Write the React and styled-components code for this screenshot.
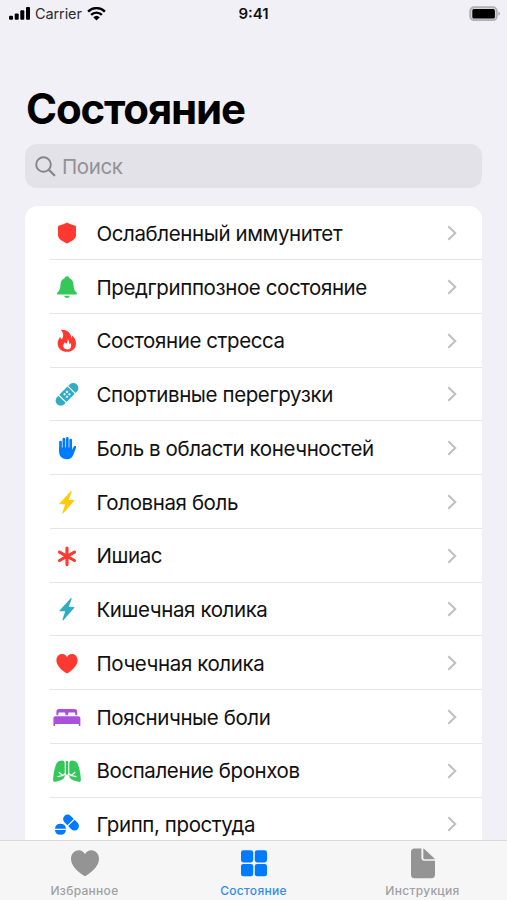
import React from "react";
import styled, { createGlobalStyle, css } from "styled-components";

const colors = {
  page: "#f1f0f6",
  field: "#e3e2e8",
  red: "#ff3830",
  green: "#34c759",
  teal: "#30acc4",
  blue: "#007aff",
  yellow: "#fecb0a",
  purple: "#ab50dc",
  gray: "#949494",
};

const GlobalStyle = createGlobalStyle`
  body {
    margin: 0;
    background: ${colors.page};
    font-family: Inter, "Liberation Sans", sans-serif;
    color: #111;
  }
`;

const ShieldIcon = () => (
  <path d="M14 3.600c2.500 1.500 5.300 2.500 7.800 2.900.8.150 1.200.6 1.200 1.400v8.300c0 3.600-4.700 6.200-9 8.200-4.300-2-9-4.600-9-8.200V7.900c0-.8.4-1.250 1.200-1.400 2.500-.4 5.300-1.400 7.800-2.900z" />
);

const BellIcon = () => (
  <>
    <path d="M14 3.300c1.300 0 2.200.8 2.500 1.900 2.500 1.100 3.800 3.100 4 6.200.2 4 .8 6 2.800 7.900.9.900 1 2.100-.3 2.100H5c-1.300 0-1.200-1.200-.3-2.100 2-1.900 2.600-3.900 2.800-7.900.2-3.100 1.500-5.100 4-6.200.3-1.100 1.200-1.900 2.500-1.900z" />
    <path d="M11.300 22.700h5.400c-.3 1.400-1.300 2.200-2.700 2.200s-2.400-.8-2.700-2.200z" />
  </>
);

const FlameIcon = () => (
  <path
    fillRule="evenodd"
    d="M7.600 2.700c6-.5 9.800 2.300 11 8.300.5-.7.700-1.500.6-2.400 2.600 2.300 3.800 4.900 3.800 7.900 0 5-3.700 8.300-9 8.300-5.500 0-9.300-3.400-9.300-8.400 0-2.500.9-4.500 2.600-6.400.2 1.200.7 2 1.500 2.600C11 9 10.600 5.600 7.600 2.700zM14.700 12.200c.2 2.200-.5 3.500-1.500 4.500-.6-.3-1-.8-1.200-1.500-1.100 1.100-1.700 2.300-1.700 3.600 0 2.200 1.600 3.600 3.900 3.600s4-1.500 4-3.700c0-1.100-.3-2-.9-2.800-.2.600-.5 1-1 1.300.1-2.100-.4-3.700-1.600-5z"
  />
);

const BandageIcon = () => (
  <g transform="rotate(-45 14 14.300)">
    <path d="M7 9.200H5.100a5.100 5.100 0 0 0 0 10.200H7z" />
    <path d="M21 9.200h1.900a5.100 5.100 0 0 1 0 10.200H21z" />
    <rect x="8.200" y="9.200" width="11.600" height="10.200" />
    <g fill="#fff" opacity="0.850">
      <rect x="11.200" y="11.500" width="2.200" height="2.200" rx="0.700" />
      <rect x="14.600" y="11.500" width="2.200" height="2.200" rx="0.700" />
      <rect x="11.200" y="14.900" width="2.200" height="2.200" rx="0.700" />
      <rect x="14.600" y="14.900" width="2.200" height="2.200" rx="0.700" />
    </g>
  </g>
);

const HandIcon = () => (
  <>
    <path
      d="M7.500 8v9M10.900 5v10M14.300 4.400v11M17.700 6v11"
      fill="none"
      stroke="currentColor"
      strokeWidth="2.700"
      strokeLinecap="round"
    />
    <path d="M6.150 13.500h12.900v2.200l1.500-2.800c.5-.9 1.400-1.100 2-.8.7.4.7 1.200.4 2l-2.500 6.400c-1.100 3-3.100 4.700-6.400 4.700-4.600 0-7.900-2.800-7.900-7.500z" />
  </>
);

const BoltIcon = () => (
  <path d="M17.700 3.200 6.500 15.400c-.4.500-.2.900.4.900h5.300L9.500 24.600c-.3.900.5 1.200 1.100.5l10.500-12c.5-.5.200-1-.4-1h-5l2.900-8.200c.3-.8-.4-1.200-.9-.7z" />
);

const AsteriskIcon = () => (
  <path
    d="M14 6v16.600M6.500 10.100l15 8.400M21.500 10.100 6.500 18.500"
    fill="none"
    stroke="currentColor"
    strokeWidth="3.100"
    strokeLinecap="round"
  />
);

const HeartIcon = () => (
  <path d="M14 24.300c-.3 0-.7-.2-1-.4C7.200 20.200 3.400 15.800 3.400 11.300c0-3.700 2.500-6.300 5.700-6.300 2.200 0 3.900 1.100 4.900 3 1-1.900 2.700-3 4.900-3 3.200 0 5.700 2.600 5.700 6.300 0 4.500-3.800 8.900-9.600 12.600-.3.200-.7.400-1 .4z" />
);

const BedIcon = () => (
  <>
    <path d="M3.400 12.200V8.700c0-1.800 1-2.700 2.800-2.700h15.200c1.800 0 2.800.9 2.800 2.700v3.500h-1.900v-1.300c0-.9-.5-1.400-1.400-1.400h-4.300c-.9 0-1.400.5-1.400 1.400v1.300h-2.800v-1.300c0-.9-.5-1.400-1.400-1.400H6.700c-.9 0-1.400.5-1.400 1.400v1.300z" />
    <path d="M2.600 13.200h22.600c1.400 0 2.200.8 2.200 2.200v7.100c0 .8-1.600.8-1.600 0v-1.600H2v1.600c0 .8-1.600.8-1.600 0v-7.100c0-1.400.8-2.200 2.200-2.200z" />
  </>
);

const LungsIcon = () => (
  <>
    <path d="M8 3.700c2.300-.4 3.700.6 3.700 2.600v12.500c0 2-1.100 3-3 3.900-2.300 1.200-4.600 1.800-6.700 2-1.300.1-2-.7-1.900-2C.4 16.500 1.500 11 3.500 6.500c.9-1.700 2.300-2.500 4.500-2.800z" />
    <path d="M20 3.700c-2.300-.4-3.700.6-3.700 2.600v12.500c0 2 1.100 3 3 3.900 2.300 1.200 4.600 1.800 6.700 2 1.300.1 2-.7 1.900-2-.3-6.200-1.400-11.700-3.400-16.200-.9-1.700-2.300-2.500-4.500-2.800z" />
    <rect x="12.800" y="4" width="2.400" height="13.500" />
    <path
      d="M12.400 16.600 9.800 18.500l-4.800 1.200M9.800 18.500l-3.600-3M15.600 16.600l2.600 1.900 4.800 1.200M18.200 18.500l3.600-3"
      fill="none"
      stroke="#fff"
      strokeWidth="1.200"
      strokeLinecap="round"
    />
  </>
);

const PillsIcon = () => (
  <>
    <path d="M1.900 18.700a5.600 5.600 0 0 1 11.100 0z" />
    <path d="M1.900 20a5.600 5.600 0 0 0 11.100 0z" />
    <g transform="rotate(45 18 12.500)">
      <path d="M17.400 8h-4.200a4.500 4.500 0 0 0 0 9h4.200z" />
      <path d="M18.600 8h4.300a4.500 4.500 0 0 1 0 9h-4.300z" />
    </g>
  </>
);

const conditions = [
  { title: "Ослабленный иммунитет", icon: ShieldIcon, color: "red" },
  { title: "Предгриппозное состояние", icon: BellIcon, color: "green" },
  { title: "Состояние стресса", icon: FlameIcon, color: "red" },
  { title: "Спортивные перегрузки", icon: BandageIcon, color: "teal" },
  { title: "Боль в области конечностей", icon: HandIcon, color: "blue" },
  { title: "Головная боль", icon: BoltIcon, color: "yellow" },
  { title: "Ишиас", icon: AsteriskIcon, color: "red" },
  { title: "Кишечная колика", icon: BoltIcon, color: "teal" },
  { title: "Почечная колика", icon: HeartIcon, color: "red" },
  { title: "Поясничные боли", icon: BedIcon, color: "purple" },
  { title: "Воспаление бронхов", icon: LungsIcon, color: "green" },
  { title: "Грипп, простуда", icon: PillsIcon, color: "blue" },
];

const StatusBar = () => (
  <StatusBarStyled>
    <StatusLeft>
      <svg width="21" height="14" viewBox="0 0 21 14">
        <rect x="0" y="8.700" width="4" height="4" rx="1" />
        <rect x="5.700" y="6.400" width="4" height="6.300" rx="1" />
        <rect x="11.300" y="3.300" width="4" height="9.400" rx="1" />
        <rect x="17" y="0" width="4" height="12.700" rx="1" />
      </svg>
      <Carrier>Carrier</Carrier>
      <svg width="19" height="14" viewBox="0 0 19 14">
        <path
          d="M1.100 4.600a12 12 0 0 1 16.800 0M4.100 7.800a7.700 7.700 0 0 1 10.800 0"
          fill="none"
          stroke="#000"
          strokeWidth="2.400"
        />
        <path d="M9.500 13.500 6.200 10.200a4.800 4.800 0 0 1 6.600 0z" />
      </svg>
    </StatusLeft>
    <Time>9:41</Time>
    <StatusRight>
      <svg width="32" height="16" viewBox="0 0 32 16">
        <rect x="1.200" y="1.200" width="26.600" height="13" rx="3.800" fill="#d5d5d7" stroke="#b0b0b2" strokeWidth="1.800" />
        <rect x="3.300" y="3.100" width="22.600" height="9.400" rx="1.600" />
        <path d="M29.300 5.500c2.300.8 2.300 3.400 0 4.200z" fill="#b0b0b2" />
      </svg>
    </StatusRight>
  </StatusBarStyled>
);

const SearchField = () => (
  <SearchStyled>
    <svg width="21" height="21" viewBox="0 0 21 21" fill="none" stroke="#858489" strokeLinecap="round">
      <circle cx="8.500" cy="8.500" r="7.300" strokeWidth="1.900" />
      <path d="m14 14 5.300 5.300" strokeWidth="2.300" />
    </svg>
    <Placeholder>Поиск</Placeholder>
  </SearchStyled>
);

const Condition = ({ title, icon: Icon, color }) => (
  <ConditionRow>
    <ConditionIcon viewBox="0 0 28 28" tint={color}>
      <Icon />
    </ConditionIcon>
    <ConditionTitle>{title}</ConditionTitle>
    <Chevron viewBox="0 0 10 16">
      <path d="m1.300 1.200 7 6.800-7 6.800" />
    </Chevron>
  </ConditionRow>
);

const TabBar = () => (
  <TabBarStyled>
    <Tab>
      <svg width="30" height="32" viewBox="0 0 30 32">
        <path d="M15 28.200c-.4 0-.9-.3-1.300-.6C6.200 22.600 1 17.100 1 10.700 1 5.800 4.300 2.200 8.600 2.200c2.800 0 5.100 1.500 6.400 3.800 1.300-2.300 3.600-3.800 6.400-3.800 4.300 0 7.600 3.600 7.600 8.500 0 6.400-5.200 11.900-12.700 16.900-.4.300-.9.600-1.300.6z" />
      </svg>
      <TabLabel>Избранное</TabLabel>
    </Tab>
    <Tab active>
      <svg width="28" height="32" viewBox="0 0 28 32">
        <rect x="1" y="2.200" width="12.200" height="12.200" rx="2.300" />
        <rect x="14.800" y="2.200" width="12.200" height="12.200" rx="2.300" />
        <rect x="1" y="16" width="12.200" height="12.200" rx="2.300" />
        <rect x="14.800" y="16" width="12.200" height="12.200" rx="2.300" />
      </svg>
      <TabLabel active>Состояние</TabLabel>
    </Tab>
    <Tab>
      <svg width="26" height="32" viewBox="0 0 26 32">
        <path d="M4.500.4h6.900v9.400c0 2 1 3 3 3H25v14c0 2.300-1.200 3.500-3.500 3.500h-17C2.200 30.300 1 29.100 1 26.800V3.900C1 1.600 2.200.4 4.500.4z" />
        <path d="M13.300.6c.7.200 1.200.5 1.800 1.100l8.600 8.100c.6.500.9.900 1.100 1.400h-10.400c-.8 0-1.100-.3-1.100-1.100z" />
      </svg>
      <TabLabel>Инструкция</TabLabel>
    </Tab>
  </TabBarStyled>
);

const App = () => (
  <>
    <GlobalStyle />
    <Screen>
      <StatusBar />
      <Content>
        <Title>Состояние</Title>
        <SearchField />
        <ConditionList>
          {conditions.map((item) => (
            <Condition key={item.title} {...item} />
          ))}
        </ConditionList>
      </Content>
      <TabBar />
    </Screen>
  </>
);

export default App;

const Screen = styled.div`
  width: 507px;
  height: 900px;
  display: flex;
  flex-direction: column;
  overflow: hidden;
  background: ${colors.page};
`;

const StatusBarStyled = styled.header`
  flex: none;
  height: 27px;
  padding: 0 6px 0 9px;
  display: grid;
  grid-template-columns: 1fr auto 1fr;
  align-items: center;
  box-sizing: border-box;
  svg {
    display: block;
  }
`;

const StatusLeft = styled.div`
  display: flex;
  align-items: center;
  gap: 5px;
`;

const StatusRight = styled.div`
  display: flex;
  justify-content: flex-end;
`;

const Carrier = styled.span`
  font-size: 14.500px;
  letter-spacing: -0.1px;
  line-height: 18px;
  color: #2b2b2d;
`;

const Time = styled.span`
  margin-right: 3px;
  font-size: 15px;
  font-weight: 600;
  line-height: 18px;
`;

const Content = styled.main`
  flex: 1;
  min-height: 0;
  overflow: hidden;
  padding: 56px 25px 0;
`;

const Title = styled.h1`
  margin: 0;
  padding-left: 1px;
  font-size: 42px;
  font-weight: 700;
  letter-spacing: -1.150px;
  line-height: 52px;
  color: #000;
`;

const SearchStyled = styled.div`
  display: flex;
  align-items: center;
  gap: 6px;
  height: 44px;
  margin-top: 9px;
  padding: 0 10px;
  box-sizing: border-box;
  border-radius: 12px;
  background: ${colors.field};
`;

const Placeholder = styled.span`
  font-size: 20.500px;
  letter-spacing: -0.400px;
  color: #929196;
`;

const ConditionList = styled.ul`
  list-style: none;
  margin: 18.300px 0 0;
  padding: 0;
  border-radius: 13px 13px 0 0;
  background: #fff;
`;

const ConditionRow = styled.li`
  display: flex;
  align-items: center;
  height: 53.750px;
  margin-left: 25px;
  padding: 0 25px 0 3px;
  box-sizing: border-box;
  &:not(:last-child) {
    box-shadow: inset 0 -1px #e4e4e7;
  }
`;

const ConditionIcon = styled.svg.withConfig({
  shouldForwardProp: (prop) => prop !== "tint",
})`
  flex: none;
  width: 28px;
  height: 28px;
  overflow: visible;
  fill: currentColor;
  ${(props) => css`
    color: ${colors[props.tint]};
  `}
`;

const ConditionTitle = styled.span`
  flex: 1;
  margin-left: 15.500px;
  padding-top: 1.500px;
  font-size: 20.500px;
  letter-spacing: -0.400px;
  line-height: 28px;
  white-space: nowrap;
`;

const Chevron = styled.svg`
  flex: none;
  width: 10px;
  height: 16px;
  fill: none;
  stroke: #bfbfc2;
  stroke-width: 2;
`;

const TabBarStyled = styled.nav`
  flex: none;
  display: grid;
  grid-template-columns: repeat(3, 1fr);
  height: 60px;
  box-sizing: border-box;
  border-top: 1px solid #d9d9db;
  background: #f6f6f7;
`;

const Tab = styled.div.withConfig({
  shouldForwardProp: (prop) => prop !== "active",
})`
  display: flex;
  flex-direction: column;
  align-items: center;
  padding-top: 7px;
  color: ${(props) => (props.active ? colors.blue : colors.gray)};
  svg {
    flex: none;
    fill: currentColor;
  }
`;

const TabLabel = styled.span.withConfig({
  shouldForwardProp: (prop) => prop !== "active",
})`
  margin-top: 3px;
  font-size: 12px;
  font-weight: 500;
  letter-spacing: 0.300px;
  line-height: 16px;
  color: ${(props) => (props.active ? "#2f8cf5" : "#a0a0a2")};
`;
